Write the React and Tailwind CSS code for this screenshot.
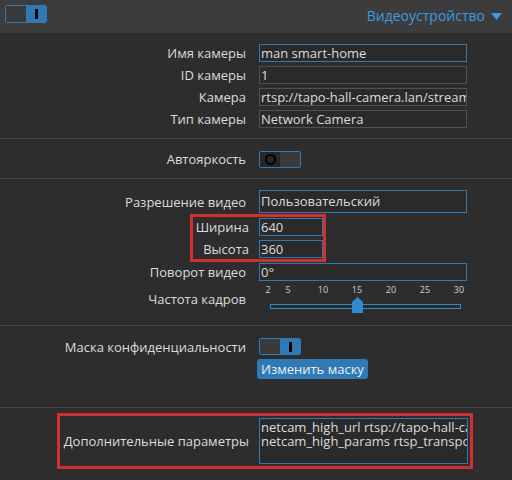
const font = { fontFamily: '"Open Sans", "Noto Sans", sans-serif' };

const Toggle = ({ on }) => (
    <div className="flex h-[17px] w-[42px] overflow-hidden rounded-[2px] border border-[#2f7ab5]">
        {on ? (
            <>
                <div className="w-[20px] bg-[#3a3a3a]" />
                <div className="flex flex-1 items-center justify-center bg-[#2f7ab5]">
                    <div className="h-[10px] w-[3px] bg-black" />
                </div>
            </>
        ) : (
            <>
                <div className="flex w-[20px] items-center justify-center bg-[#262626]">
                    <div className="h-[11px] w-[11px] rounded-full border-2 border-black" />
                </div>
                <div className="flex-1 bg-[#3a3a3a]" />
            </>
        )}
    </div>
);

const Row = ({ label, children, className = '' }) => (
    <div className={`flex items-center ${className}`}>
        <div className="w-[259px] pr-[13px] text-right text-[13px] leading-[18px] text-[#dcdcdc]">{label}</div>
        {children}
    </div>
);

const Field = ({ value, focus, className = 'w-[208px] h-[18px]' }) => (
    <div
        className={`${className} flex items-center overflow-hidden whitespace-nowrap border bg-[#2a2a2a] pl-[1px] text-[13px] leading-none text-[#dcdcdc] ${
            focus ? 'border-[#2f7ab5]' : 'border-[#505050]'
        }`}
    >
        {value}
    </div>
);

const ticks = [
    ['2', 268],
    ['5', 288],
    ['10', 323],
    ['15', 357],
    ['20', 391],
    ['25', 425],
    ['30', 459],
];

const App = () => {
    return (
        <div className="h-[480px] w-[512px] overflow-hidden bg-[#2d2d2d]" style={font}>
            <div className="flex h-[33px] items-start justify-between bg-[#3c3c3c] pl-[5px] pr-[10px] pt-[5px]">
                <div className="flex h-[18px] w-[42px] overflow-hidden rounded-[2px] border border-[#2f7ab5]">
                    <div className="w-[20px] bg-[#3a3a3a]" />
                    <div className="flex flex-1 items-center justify-center bg-[#2f7ab5]">
                        <div className="h-[10px] w-[3px] bg-black" />
                    </div>
                </div>
                <div className="flex items-center gap-[6px] pt-[1px] text-[14px] leading-[20px] text-[#3d9be0]">
                    <span>Видеоустройство</span>
                    <svg width="11" height="7" viewBox="0 0 11 7">
                        <path d="M0 0 H11 L5.5 7 Z" fill="#3d9be0" />
                    </svg>
                </div>
            </div>

            <div className="flex flex-col gap-[4px] border-b border-[#454545] pb-[10px] pt-[11px]">
                <Row label="Имя камеры"><Field value="man smart-home" focus /></Row>
                <Row label="ID камеры"><Field value="1" /></Row>
                <Row label="Камера"><Field value="rtsp://tapo-hall-camera.lan/stream" /></Row>
                <Row label="Тип камеры"><Field value="Network Camera" /></Row>
            </div>

            <div className="border-b border-[#454545] pb-[10px] pt-[11px]">
                <Row label="Автояркость"><Toggle on={false} /></Row>
            </div>

            <div className="border-b border-[#454545] pb-[11px] pt-[11px]">
                <Row label="Разрешение видео"><Field value="Пользовательский" focus className="w-[208px] h-[23px]" /></Row>
                <div className="ml-[190px] mt-[1px] w-[136px] border-[3px] border-[#d0302f] py-[1px]">
                    <div className="flex items-center">
                        <div className="w-[66px] pr-[10px] text-right text-[13px] leading-[18px] text-[#dcdcdc]">Ширина</div>
                        <Field value="640" focus className="w-[64px] h-[18px]" />
                    </div>
                    <div className="mt-[4px] flex items-center">
                        <div className="w-[66px] pr-[10px] text-right text-[13px] leading-[18px] text-[#dcdcdc]">Высота</div>
                        <Field value="360" focus className="w-[64px] h-[18px]" />
                    </div>
                </div>
                <Row label="Поворот видео" className="mt-[1px]"><Field value="0°" focus /></Row>
                <Row label="Частота кадров" className="mt-[3px]">
                    <div className="relative h-[30px] w-[208px]">
                        {ticks.map(([t, x]) => (
                            <span
                                key={t}
                                className="absolute top-0 -translate-x-1/2 text-[9px] leading-[12px] text-[#cfcfcf]"
                                style={{ left: x - 259 }}
                            >
                                {t}
                            </span>
                        ))}
                        <div className="absolute left-[11px] top-[20px] h-[5px] w-[191px] border border-[#2f8ad0] bg-[#2a2a2a]" />
                        <svg className="absolute left-[93px] top-[13px]" width="11" height="16" viewBox="0 0 11 16">
                            <path d="M0 5 L5.5 0 L11 5 V16 H0 Z" fill="#2f8ad0" />
                        </svg>
                    </div>
                </Row>
            </div>

            <div className="border-b border-[#454545] pb-[28px] pt-[12px]">
                <Row label="Маска конфиденциальности" className="items-start">
                    <div className="flex flex-col items-start gap-[4px]">
                        <Toggle on />
                        <button className="-ml-[2px] rounded-[3px] bg-[#2f7ab5] px-[4px] py-[1px] text-[13px] leading-[18px] text-[#f0f0f0]">
                            Изменить маску
                        </button>
                    </div>
                </Row>
            </div>

            <div className="mx-[57px] mt-[5px] flex h-[56px] w-[416px] items-center border-[3px] border-[#d0302f]">
                <div className="w-[199px] pr-[10px] text-right text-[13px] leading-[18px] text-[#dcdcdc]">Дополнительные параметры</div>
                <div className="h-[46px] w-[209px] overflow-hidden whitespace-pre border border-[#2f7ab5] bg-[#2a2a2a] pl-[1px] pt-[1px] text-[13px] leading-[14px] text-[#dcdcdc]">
                    {'netcam_high_url rtsp://tapo-hall-camera.lan/stream1\nnetcam_high_params rtsp_transport=tcp'}
                </div>
            </div>
        </div>
    );
};

export default App;
